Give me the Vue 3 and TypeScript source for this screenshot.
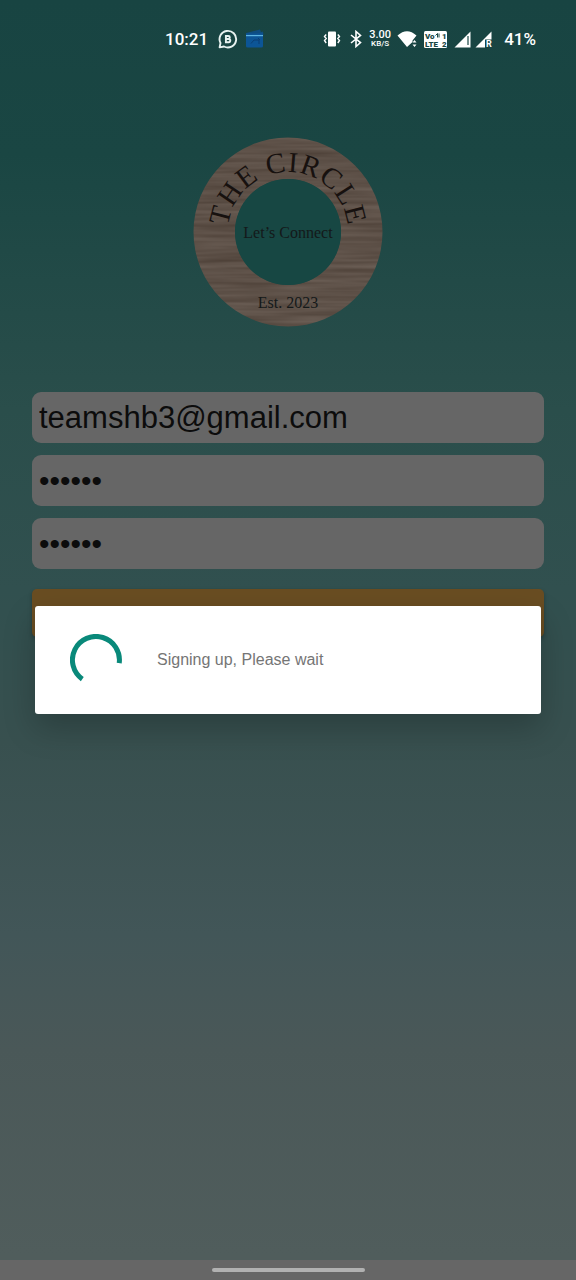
<script setup lang="ts">
import { ref } from 'vue'

const email = ref('teamshb3@gmail.com')
const password = ref('circle')
const confirmation = ref('circle')
</script>

<template>
  <div class="screen">
    <header class="status">
      <time class="clock">10:21</time>
      <svg class="chat" viewBox="0 0 20 20" width="20" height="20" aria-hidden="true">
        <path d="M1.600 18.400 2.500 14A8.300 8.300 0 1 1 6 17.500Z" fill="none" stroke="#e8f2f0" stroke-width="1.900" stroke-linejoin="round" />
        <path d="M7.900 7h2.400a1.500 1.500 0 0 1 0 3H7.900zM7.900 10h2.800a1.600 1.600 0 0 1 0 3.200H7.900z" fill="none" stroke="#e8f2f0" stroke-width="1.900" />
      </svg>
      <svg class="wallet" viewBox="0 0 20 20" width="20" height="20" aria-hidden="true">
        <path d="M1 4 15 .600l1 2.400 2-.600.400 4H1z" fill="#0d4c80" />
        <path d="M1 4.500h17V17q0 1.500-1.500 1.500h-14Q1 18.500 1 17z" fill="#0c5596" />
        <path d="M1 6.600h17" stroke="#5eb4e2" stroke-width="1.200" />
        <path d="M6 14.500 9 11h5v4M13 9l2 2" stroke="#0a3f74" fill="none" />
      </svg>
      <div class="indicators">
        <svg viewBox="0 0 18 18" width="18" height="18" aria-hidden="true">
          <rect x="5" y="1.500" width="8" height="15" rx="1" fill="#fff" />
          <path d="M3.200 4.500 1.500 6.500l1.700 2-1.700 2 1.700 2.500M14.800 4.500l1.700 2-1.700 2 1.700 2-1.700 2.500" fill="none" stroke="#fff" stroke-width="1.400" />
        </svg>
        <svg class="bluetooth" viewBox="0 0 12 18" width="12" height="18" aria-hidden="true">
          <path d="M1 5 10.500 12.600 6 16.500v-15l4.500 3.900L1 13" fill="none" stroke="#fff" stroke-width="1.600" />
        </svg>
        <div class="speed"><span class="rate">3.00</span><span class="unit">KB/S</span></div>
        <svg class="wifi" viewBox="0 0 21 18" width="21" height="18" aria-hidden="true">
          <path d="M.500 5.500Q10 -3 19.500 5.500L15.500 10.500V12L10 17z" fill="#fff" />
          <path d="m15.500 12.500 2-2.500 2 2.500zm0 2 2 2.500 2-2.500z" fill="#fff" />
        </svg>
        <svg class="volte" viewBox="0 0 23 17" width="23" height="17" role="img" aria-label="VoLTE">
          <rect width="23" height="17" rx="1.500" fill="#fff" />
          <g class="volte-text">
            <text x="1" y="8">Vo</text><text x="18" y="8">1</text>
            <text x="1" y="16">LTE</text><text x="18" y="16">2</text>
          </g>
          <path d="m11.500 4.500 2-2v4m1.500-4v4" fill="none" stroke="#194643" stroke-width="1" />
        </svg>
        <svg class="signal" viewBox="0 0 17 17" width="17" height="17" aria-hidden="true">
          <path d="M.500 16.500 16.500.500v16z" fill="#fff" />
          <path d="M14 5v9" stroke="#194643" stroke-width="1.200" />
        </svg>
        <svg class="signal roaming" viewBox="0 0 17 17" width="17" height="17" aria-hidden="true">
          <path d="M.500 16.500 16.500.500V8.500H10v8z" fill="#fff" />
          <text x="11" y="16" class="roaming-text">R</text>
        </svg>
        <span class="battery">41%</span>
      </div>
    </header>

    <main class="content">
      <svg class="logo" viewBox="0 0 190 190" width="190" height="190" role="img" aria-label="The Circle">
        <defs>
          <filter id="grain" x="0" y="0" width="100%" height="100%" color-interpolation-filters="sRGB">
            <feTurbulence type="fractalNoise" baseFrequency="0.012 0.22" numOctaves="2" seed="8" />
            <feColorMatrix values="0.15 0 0 0 0.290  0.15 0 0 0 0.240  0.15 0 0 0 0.205  0 0 0 0 1" />
            <feComposite in2="SourceGraphic" operator="in" />
          </filter>
          <path id="arch" d="M35 95A60 60 0 0 1 155 95" />
        </defs>
        <g filter="url(#grain)">
          <path fill-rule="evenodd" d="M.500 95a94.500 94.500 0 1 1 189 0a94.500 94.500 0 1 1-189 0M42 95a53 53 0 1 0 106 0a53 53 0 1 0-106 0" />
        </g>
        <circle cx="95" cy="95" r="53" fill="#174743" />
        <text class="arch-text"><textPath href="#arch" startOffset="50%">THE CIRCLE</textPath></text>
        <text class="motto" x="95" y="101">Let’s Connect</text>
        <text class="motto" x="95" y="171">Est. 2023</text>
      </svg>

      <form class="form" @submit.prevent>
        <input v-model="email" class="field" type="email" aria-label="Email" />
        <input v-model="password" class="field secret" type="password" aria-label="Password" />
        <input v-model="confirmation" class="field secret" type="password" aria-label="Confirm password" />
        <button class="submit" type="submit" aria-label="Sign up"></button>
      </form>
    </main>

    <footer class="navigation"><span class="handle"></span></footer>

    <div class="overlay">
      <section class="dialog" role="dialog" aria-modal="true" aria-labelledby="progress-label">
        <svg class="spinner" viewBox="0 0 52 52" width="52" height="52" aria-hidden="true">
          <path d="M12.300 45.100A23.500 23.500 0 1 1 49.200 29.200" fill="none" stroke="#09897a" stroke-width="5" />
        </svg>
        <p id="progress-label" class="message">Signing up, Please wait</p>
      </section>
    </div>
  </div>
</template>

<style>
body {
  margin: 0;
}
</style>

<style scoped>
.screen {
  position: relative;
  display: flex;
  flex-direction: column;
  min-height: 100vh;
  background: linear-gradient(#184442 0, #1a4643 12%, #2a4e4b 32%, #31504f 46%, #38504f 58%, #425658 73%, #4a5858 82%, #505d5c 98%);
  font-family: "Liberation Sans", Arial, sans-serif;
}

.status {
  display: flex;
  align-items: center;
  height: 78px;
  padding: 0 40px 0 165px;
  color: #fff;
  font-family: Roboto, sans-serif;
  font-size: 17px;
  font-weight: 500;
}

.chat {
  margin-left: 10px;
}

.wallet {
  margin-left: 7px;
}

.indicators {
  display: flex;
  align-items: center;
  margin-left: auto;
}

.bluetooth {
  margin-left: 9px;
}

.speed {
  display: flex;
  flex-direction: column;
  align-items: center;
  width: 22px;
  margin-left: 7px;
}

.rate {
  font-size: 11px;
  line-height: 10px;
}

.unit {
  font-size: 8px;
  line-height: 8px;
}

.wifi {
  margin-left: 6px;
}

.volte {
  margin-left: 6px;
}

.volte-text {
  fill: #194643;
  font-size: 8px;
  font-weight: 900;
}

.signal {
  margin-left: 7px;
}

.roaming {
  margin-left: 4px;
  overflow: visible;
}

.roaming-text {
  fill: #fff;
  font-size: 9px;
  font-weight: 700;
}

.battery {
  margin-left: 12px;
}

.content {
  display: flex;
  flex: 1;
  flex-direction: column;
  align-items: center;
  padding: 59px 32px 40px;
}

.logo {
  font-family: "Liberation Serif", "Times New Roman", serif;
}

.arch-text {
  fill: #17110f;
  font-size: 29px;
  letter-spacing: 1px;
  text-anchor: middle;
}

.motto {
  fill: #14191a;
  font-size: 16px;
  text-anchor: middle;
}

.form {
  display: flex;
  flex-direction: column;
  gap: 12px;
  width: 100%;
  margin-top: 65px;
}

.field {
  box-sizing: border-box;
  width: 100%;
  height: 51px;
  padding: 0 7px;
  border: 0;
  border-radius: 9px;
  outline: 0;
  background: #666;
  color: #0c0c0c;
  font-family: inherit;
  font-size: 31px;
}

.secret {
  font-size: 30px;
}

.submit {
  height: 48px;
  margin-top: 8px;
  border: 0;
  border-radius: 5px;
  background: #694d22;
  box-shadow: 0 2px 4px rgba(0, 0, 0, 0.25);
}

.navigation {
  display: flex;
  align-items: center;
  justify-content: center;
  height: 20px;
  background: #666;
}

.handle {
  width: 153px;
  height: 4px;
  border-radius: 2px;
  background: #b1b1b1;
}

.overlay {
  position: absolute;
  inset: 60px 0 20px;
  display: flex;
  align-items: center;
  padding: 0 35px;
}

.dialog {
  display: flex;
  flex: 1;
  align-items: center;
  gap: 35px;
  padding: 28px 35px;
  border-radius: 3px;
  background: #fff;
  box-shadow: 0 14px 32px rgba(0, 0, 0, 0.22);
}

.message {
  margin: 0;
  color: #757575;
  font-size: 16px;
  line-height: 20px;
}
</style>
